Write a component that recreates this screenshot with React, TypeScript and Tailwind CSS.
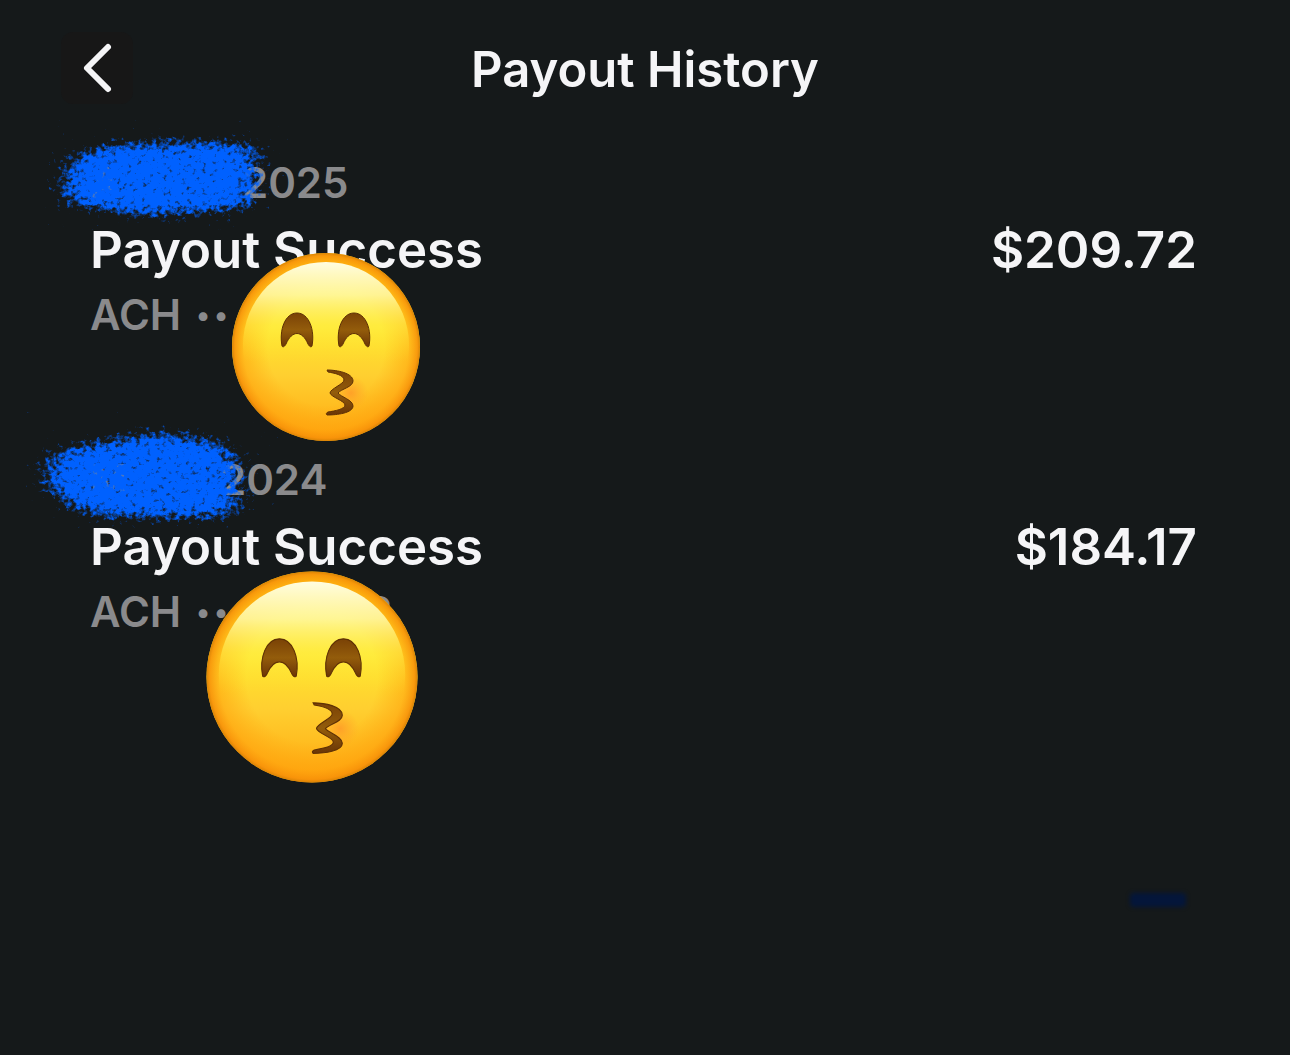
import React from "react";

type Payout = {
  id: number;
  month: string;
  year: string;
  status: string;
  method: string;
  last: string;
  amount: string;
};

const payouts: Payout[] = [
  { id: 1, month: "A", year: "2025", status: "Payout Success", method: "ACH", last: "", amount: "$209.72" },
  { id: 2, month: "M", year: "2024", status: "Payout Success", method: "ACH", last: "3", amount: "$184.17" },
];

const scribbles = [
  {
    className: "absolute -left-12 -top-9 w-[260px] h-[112px]",
    d: "M18 62 L28 38 L70 24 L160 22 L214 24 L218 48 L213 86 L190 92 L150 94 L110 98 L70 93 L24 86 Z",
  },
  {
    className: "absolute -left-16 -top-10 w-[260px] h-[118px]",
    d: "M16 57 L30 38 L80 28 L125 20 L170 24 L204 34 L215 54 L212 103 L190 106 L75 106 L40 94 L20 74 Z",
  },
];

const faces = [
  "absolute left-[130px] top-[86px] w-[212px] h-[212px]",
  "absolute left-[103px] top-[106px] w-[238px] h-[238px]",
];

function Scribble({ id, className, d }: { id: number; className: string; d: string }) {
  return (
    <svg className={className} viewBox={id === 1 ? "0 0 260 112" : "0 0 260 118"} aria-hidden="true">
      <defs>
        <filter id={`brush${id}`} x="0" y="0" width="100%" height="100%" filterUnits="userSpaceOnUse" colorInterpolationFilters="sRGB">
          <feGaussianBlur in="SourceAlpha" stdDeviation="14 7" result="soft" />
          <feTurbulence type="fractalNoise" baseFrequency="0.2 0.22" numOctaves="3" seed={id + 3} />
          <feColorMatrix values="0 0 0 0 0  0 0 0 0 0  0 0 0 0 0  1 0 0 0 0" result="noise" />
          <feComposite in="soft" in2="noise" operator="arithmetic" k2="1.6" k3="2.1" k4="-1.7" />
          <feComponentTransfer>
            <feFuncA type="linear" slope="1.4" intercept="0" />
          </feComponentTransfer>
          <feColorMatrix values="0 0 0 0 0  0 0 0 0 0.38  0 0 0 0 1  0 0 0 1 0" />
        </filter>
      </defs>
      <path d={d} filter={`url(#brush${id})`} />
    </svg>
  );
}

function KissFace({ id, className }: { id: number; className: string }) {
  return (
    <svg className={className} viewBox="-12 -12 212 212" role="img" aria-label="Kissing face">
      <defs>
        <linearGradient id={`skin${id}`} x1="0" y1="0" x2="0" y2="1">
          <stop offset="0" stopColor="#ffc814" />
          <stop offset="0.4" stopColor="#ffe62e" />
          <stop offset="0.65" stopColor="#ffcf30" />
          <stop offset="1" stopColor="#ffa90f" />
        </linearGradient>
        <radialGradient id={`rim${id}`} cx="0.5" cy="0.5" r="0.5">
          <stop offset="0.62" stopColor="#ff9d0a" stopOpacity="0" />
          <stop offset="0.88" stopColor="#ff9d0a" stopOpacity="0.5" />
          <stop offset="0.97" stopColor="#f78f08" stopOpacity="0.85" />
          <stop offset="1" stopColor="#d98305" />
        </radialGradient>
        <linearGradient id={`shine${id}`} x1="0" y1="0" x2="0" y2="1">
          <stop offset="0" stopColor="#fffde0" />
          <stop offset="0.2" stopColor="#fffba8" stopOpacity="0.85" />
          <stop offset="0.38" stopColor="#fff250" stopOpacity="0.5" />
          <stop offset="0.6" stopColor="#ffe62e" stopOpacity="0" />
        </linearGradient>
        <linearGradient id={`brown${id}`} x1="0" y1="0" x2="0" y2="1">
          <stop offset="0" stopColor="#7a4206" />
          <stop offset="0.5" stopColor="#935c0b" />
          <stop offset="1" stopColor="#6b3606" />
        </linearGradient>
        <radialGradient id={`cheek${id}`}>
          <stop offset="0" stopColor="#ff8a28" stopOpacity="0.6" />
          <stop offset="1" stopColor="#ff9a28" stopOpacity="0" />
        </radialGradient>
      </defs>
      <circle cx="94" cy="94" r="94" fill={`url(#skin${id})`} />
      <circle cx="94" cy="94" r="94" fill={`url(#rim${id})`} />
      <ellipse cx="94" cy="92" rx="83" ry="83" fill={`url(#shine${id})`} />
      <circle cx="119" cy="140" r="17" fill={`url(#cheek${id})`} />
      <g fill={`url(#brown${id})`} stroke="#5f3105" strokeWidth="1">
        <path d="M50 93 C47 77 53 60 65 60 C77 60 83 77 80 93 C79 95 77 93 76 91 C70 77 60 77 54 91 C53 93 51 95 50 93 Z" />
        <path d="M107 93 C104 77 110 60 122 60 C134 60 140 77 137 93 C136 95 134 93 133 91 C127 77 117 77 111 91 C110 93 108 95 107 93 Z" />
        <path d="M95 117 C105 117 121 120 121 128 C121 134 109 136 106 140 C109 144 121 147 121 153 C121 160 105 162 95 162 C94 161 94 160 96 159 C103 158 113 156 113 152 C113 148 99 144 98 140 C98 136 112 131 112 127 C112 122 102 120 96 119 Z" />
      </g>
    </svg>
  );
}

export default function App() {
  return (
    <main className="min-h-screen bg-[#15191a] pt-8 font-['Inter',sans-serif] text-[#f5f5f7]">
      <header className="grid grid-cols-[72px_1fr_72px] items-center px-[61px]">
        <button type="button" aria-label="Back" className="flex h-[72px] items-center justify-center rounded-xl bg-[#171717]">
          <svg className="h-[54px] w-[36px]" viewBox="0 0 36 54" fill="none" stroke="currentColor" strokeWidth="6" strokeLinecap="round" strokeLinejoin="round" aria-hidden="true">
            <path d="M29 6 L8 27 L29 48" />
          </svg>
        </button>
        <h1 className="pt-1 text-center text-[49px] leading-[68px] font-semibold">Payout History</h1>
      </header>

      <ul className="pt-[51px] pr-[93px] pl-[90px]">
        {payouts.map((p, i) => (
          <li key={p.id} className="relative h-[297px]">
            <p className="flex text-[42px] leading-[56px] font-semibold text-[#8a8a8c]">
              <span className={i === 0 ? "w-[152px]" : "w-[130px]"}>{p.month}</span>
              <span>{p.year}</span>
            </p>
            <div className="flex justify-between text-[51px] leading-[78px] font-semibold">
              <h2>{p.status}</h2>
              <span>{p.amount}</span>
            </div>
            <p className="flex text-[42px] leading-[52px] font-semibold text-[#8a8a8c]">
              <span className="w-[106px]">{p.method}</span>
              <span className="flex w-[170px] gap-1 text-[28px]">
                <span>•</span>
                <span>•</span>
              </span>
              <span>{p.last}</span>
            </p>
            <Scribble id={p.id} {...scribbles[i]} />
            <KissFace id={p.id} className={faces[i]} />
          </li>
        ))}
      </ul>
      <div className="mt-[144px] mr-[104px] ml-auto h-[14px] w-[56px] rounded bg-[#04163a] blur-[2px]" />
    </main>
  );
}
